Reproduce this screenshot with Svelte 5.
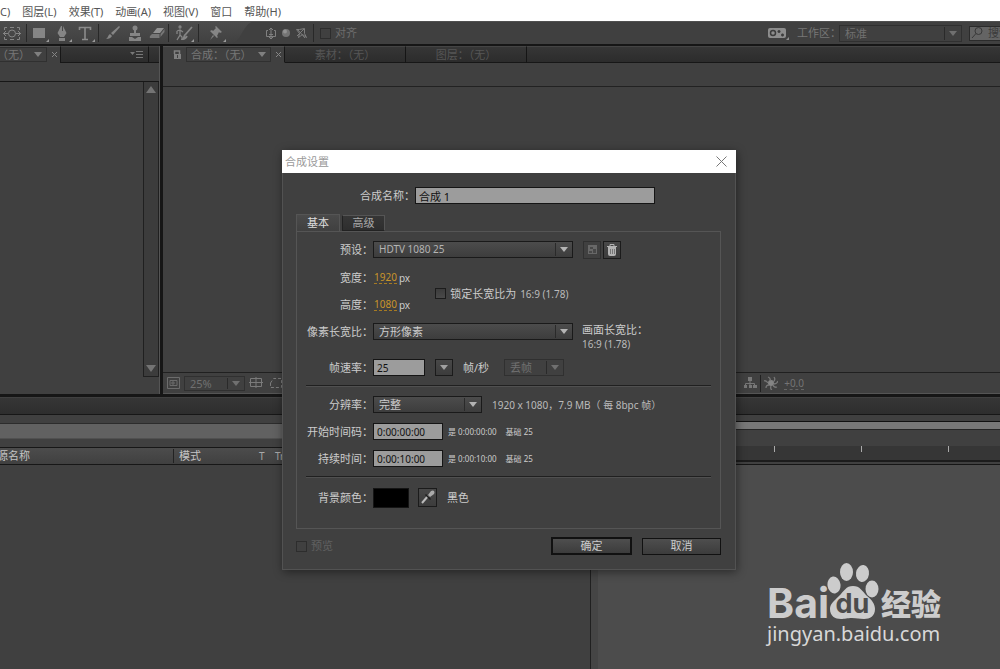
<script>
  let compName = $state('合成 1');
  let frameRate = $state('25');
  let startCode = $state('0:00:00:00');
  let duration = $state('0:00:10:00');
  let lockAspect = $state(false);

  const menus = ['C)', '图层(L)', '效果(T)', '动画(A)', '视图(V)', '窗口', '帮助(H)'];
  const inactiveTabs = ['素材：（无）', '图层：（无）'];
</script>

<div class="app">
  <nav class="menubar" aria-label="菜单">
    {#each menus as item}<button>{item}</button>{/each}
  </nav>

  <div class="toolbar">
    <div class="tools">
      <div class="group first">
        <button class="tool" aria-label="锚点工具">
          <svg width="22" height="20" viewBox="0 0 22 20" fill="none" stroke="#858585"><path d="M3.500 7V4.500H6M16 4.500h2.500V7M18.500 14v2.500H16M6 16.500H3.500V14M9 4.500h4M9 16.500h4"/><circle cx="11" cy="10.500" r="3.500"/><path d="M2 10.500h5M15 10.500h5M5 8l-2.500 2.500L5 13M17 8l2.500 2.500L17 13"/></svg>
        </button>
      </div>
      <div class="group shapes">
        <button class="tool" aria-label="矩形工具">
          <svg width="22" height="20" viewBox="0 0 22 20"><path fill="#858585" d="M5 5h12v10H5z"/><path fill="#9a9a9a" d="M21 16v3h-3z"/></svg>
        </button>
        <button class="tool" aria-label="钢笔工具">
          <svg width="22" height="20" viewBox="0 0 22 20"><path fill="#858585" d="M10 3h1v5h1V3l3.500 7-2.500 4H9l-2.500-4zM8 15h6v3H8z"/><path fill="#9a9a9a" d="M21 16v3h-3z"/></svg>
        </button>
        <button class="tool" aria-label="文字工具">
          <svg width="22" height="20" viewBox="0 0 22 20" fill="none" stroke="#8b8b8b" stroke-width="1.600"><path d="M5.500 7V4.500h11V7M11 4.500v12M8 16.500h6"/><path fill="#9a9a9a" stroke="none" d="M21 16v3h-3z"/></svg>
        </button>
      </div>
      <div class="group paint">
        <button class="tool" aria-label="画笔工具">
          <svg width="22" height="20" viewBox="0 0 22 20" fill="#858585"><path d="M17 3l1 1-7 8-2-2zM8 11l2 2c-1 2-3 3-6 3 2-1 2-4 4-5z"/></svg>
        </button>
        <button class="tool" aria-label="图章工具">
          <svg width="22" height="20" viewBox="0 0 22 20" fill="#858585"><circle cx="11" cy="5" r="2.500"/><path d="M10 7h2v3h4v3H6v-3h4zM5 14h3l3 2 3-2h3v4H5z"/></svg>
        </button>
        <button class="tool" aria-label="橡皮擦工具">
          <svg width="22" height="20" viewBox="0 0 22 20"><path fill="#929292" d="M11 5h7l-4 5H7z"/><path fill="#777" d="M6 11h7.500v4H5q-2 0-1-2zM14.500 11l4-5v3l-4 5z"/></svg>
        </button>
      </div>
      <div class="group single">
        <button class="tool" aria-label="旋转画笔工具">
          <svg width="22" height="20" viewBox="0 0 22 20" fill="none" stroke="#858585" stroke-width="1.300"><circle cx="7" cy="4" r="1"/><path d="M4 8l3-1 3 2M7 7v5l-3 5M7 12l2 2v3M4 8v3"/><path d="M19 4l-7 8M12 12c-1 1-1 3-2 4 2 0 3-1 4-3" stroke-width="1.800"/><path fill="#9a9a9a" stroke="none" d="M21 16v3h-3z"/></svg>
        </button>
      </div>
      <div class="group pin">
        <button class="tool" aria-label="操控点工具">
          <svg width="22" height="20" viewBox="0 0 22 20"><path fill="#858585" d="M11 3l6 6-2 1-1-1-2 4 1 1-1 1-7-7 2-1 1 1 3-3-1-1zM8 12l1 1-4 4z"/><path fill="#9a9a9a" d="M21 16v3h-3z"/></svg>
        </button>
      </div>
      <svg class="swoop" width="27" height="23" viewBox="0 0 27 23"><path fill="#404040" d="M0 23C12 20 11 2 24 0h3v23z"/></svg>
    </div>
    <div class="group axes">
      <button class="axis" aria-label="本地轴模式"><svg width="14" height="14" viewBox="0 0 14 14" fill="none" stroke="#808080"><path d="M4 4.500H2.500v6h9v-6H10M7 2v11M5 4l2-2 2 2M5 8.500h4M5 11l2 2 2-2"/></svg></button>
      <button class="axis" aria-label="世界轴模式"><svg width="14" height="14" viewBox="0 0 14 14"><circle cx="7" cy="7" r="4" fill="#747474"/><circle cx="6" cy="5.500" r="2" fill="#929292"/></svg></button>
      <button class="axis" aria-label="视图轴模式"><svg width="14" height="14" viewBox="0 0 14 14" fill="none" stroke="#7d7d7d"><path d="M2.500 3.500h3l5-1v5l2 4-4-3-4 3 1-4zM4 4l7 8M10 3l-7 7"/></svg></button>
    </div>
    <label class="snap"><input type="checkbox" class="check dim" /><span>对齐</span></label>

    <div class="workspace">
      <svg width="21" height="14" viewBox="0 0 21 14"><rect x="0" y="2" width="18" height="10" rx="2" fill="#8d8d8d"/><g fill="none" stroke="#3c3c3c" stroke-width="1.500"><circle cx="5" cy="7" r="2.500"/><path d="M9.500 5.500h3M11 4v3M13 9h3M14.500 7.500v3"/></g><path fill="#8d8d8d" d="M21 11v3h-3z"/></svg>
      <label for="ws">工作区：</label>
      <span class="select dim ws"><select id="ws"><option>标准</option></select></span>
      <span class="search">
        <svg width="14" height="14" viewBox="0 0 14 14" fill="none" stroke="#383838"><circle cx="8.500" cy="5" r="3.500"/><path d="M6 7.500L2 12"/></svg>
        <input aria-label="搜索帮助" placeholder="搜索帮助" />
      </span>
    </div>
  </div>

  <div class="upper">
    <section class="project">
      <div class="tabs">
        <div class="tab on left-tab">
          <button class="viewer"><span>（无）</span><i class="arrow"></i></button>
          <button class="x" aria-label="关闭"><svg width="7" height="7" viewBox="0 0 7 7" stroke="#858585"><path d="M1 1l5 5M6 1L1 6"/></svg></button>
        </div>
        <div class="tab rest"><button class="panelmenu" aria-label="面板菜单"><svg width="14" height="9" viewBox="0 0 14 9"><path fill="#777" d="M0 2h5L2.500 5zM6 1h7v1H6zM6 4h7v1H6zM6 7h7v1H6z"/></svg></button></div>
        <div class="tab edge"></div>
      </div>
      <div class="project-body">
        <div class="scroll"><i class="arrow up"></i><i class="arrow"></i></div>
      </div>
    </section>
    <section class="viewerpanel">
      <div class="tabs">
        <div class="tab on comp-tab">
          <svg width="9" height="11" viewBox="0 0 9 11"><path fill="none" stroke="#808080" stroke-width="1.500" d="M1.500 5V2h5v3"/><path fill="#808080" d="M1 5h7v5H1z"/><path fill="#404040" d="M4 6h1v3H4z"/></svg>
          <button class="viewer wide"><span>合成：（无）</span><i class="arrow"></i></button>
          <button class="x" aria-label="关闭"><svg width="7" height="7" viewBox="0 0 7 7" stroke="#858585"><path d="M1 1l5 5M6 1L1 6"/></svg></button>
        </div>
        {#each inactiveTabs as tab}<button class="tab off">{tab}</button>{/each}
        <div class="tab rest"></div>
      </div>
      <div class="canvas-head"></div>
      <div class="canvas"></div>
      <div class="viewbar">
        <div class="viewleft">
          <svg width="13" height="12" viewBox="0 0 13 12" fill="none" stroke="#6c6c6c"><path d="M.5 .5h12v11H.5zM3 3.500h7v5H3zM5 5h2v2H5z"/></svg>
          <span class="select dim zoom"><select aria-label="放大率"><option>25%</option></select></span>
          <svg width="14" height="12" viewBox="0 0 14 12" fill="none" stroke="#7b7b7b"><path d="M1.500 1.500h11v8h-11zM7 0v11M0 5.500h14"/></svg>
          <svg class="mask" width="14" height="12" viewBox="0 0 14 12" fill="none" stroke="#7b7b7b"><path stroke-dasharray="3 2" d="M1.500 6l3-4.500h8v9h-11z"/></svg>
        </div>
        <svg width="4" height="12" viewBox="0 0 4 12" fill="none" stroke="#6c6c6c"><path d="M0 2.500h2.500v7H0"/></svg>
        <svg width="14" height="12" viewBox="0 0 14 12"><path fill="#777" d="M5 0h4v4H5zM1 8h3v3H1zM6 8h3v3H6zM10 8h4v3h-4z"/><path fill="none" stroke="#777" d="M7 4v4M2.500 8V6.500h9V8"/></svg>
        <i class="vsep"></i>
        <svg width="14" height="14" viewBox="0 0 14 14"><circle cx="7" cy="7" r="3" fill="#858585"/><path fill="none" stroke="#777" stroke-width="1.300" d="M6 5Q7 2 4 1M9 6Q12 4 10 1M10 8q3 0 4-3M9 9q1 3 4 2M7 10q-1 3 1 4M5 9q-3 0-3 3M4 7Q2 4 0 5"/></svg>
        <span class="exposure">+0.0</span>
      </div>
    </section>
  </div>

  <div class="lower">
    <div class="band"></div>
    <div class="timeline">
      <section class="layers">
        <div class="work-left"></div>
        <div class="cols"><span class="src">源名称</span><span class="mode">模式</span><span class="t">T</span><span>TrkMat</span></div>
      </section>
      <div class="splitter"></div>
      <section class="ruler">
        <div class="nav"></div>
        <div class="gap"></div>
        <div class="ticks"><i></i><i></i><i></i></div>
        <div class="ruler-foot"></div>
        <div class="tracks">
          <div class="brand">
            <div class="brand-top">
              <span class="bai">Bai</span>
              <svg width="52" height="58" viewBox="0 0 52 58"><g fill="#ccc"><ellipse cx="7" cy="22" rx="6.500" ry="8.500" transform="rotate(-8 7 22)"/><ellipse cx="19.500" cy="9" rx="6.500" ry="9"/><ellipse cx="35.500" cy="10.500" rx="6.500" ry="8.500" transform="rotate(8 35.500 10.500)"/><ellipse cx="45" cy="26" rx="6.500" ry="8.500"/><path d="M26 23c7 0 9 5 14 10 5 4 8 8 8 13 0 7-5 10-11 10-5 0-7-1-12-1s-7 1-11 1C8 56 3 53 3 46c0-5 4-8 9-13 5-5 7-10 14-10z"/></g><text x="25.500" y="50" text-anchor="middle" class="du">du</text></svg>
              <span class="jy">经验</span>
            </div>
            <div class="url">jingyan.baidu.com</div>
          </div>
        </div>
      </section>
    </div>
  </div>

  <div class="dialog" role="dialog" aria-labelledby="dlg-title">
    <header>
      <span id="dlg-title">合成设置</span>
      <button aria-label="关闭"><svg width="11" height="11" viewBox="0 0 11 11" stroke="#777"><path d="M.5 .5l10 10M10.500 .5l-10 10"/></svg></button>
    </header>
    <form class="body" onsubmit={(e) => e.preventDefault()}>
      <div class="name"><label for="cname">合成名称：</label><input id="cname" class="field" bind:value={compName} /></div>
      <div class="dtabs"><button type="button" class="sel">基本</button><button type="button">高级</button></div>
      <div class="panel">
        <div class="row">
          <label for="preset">预设：</label>
          <span class="select full"><select id="preset"><option>HDTV 1080 25</option></select></span>
          <div class="pair">
            <button type="button" class="icon off" aria-label="存储预设"><svg width="11" height="11" viewBox="0 0 11 11"><path fill="#686868" d="M1 1h9v9H1z"/><path fill="#484848" d="M3 3h3v2H3zM6 5h3v4H6zM2 7h3v2H2z"/></svg></button>
            <button type="button" class="icon" aria-label="删除预设"><svg width="12" height="14" viewBox="0 0 12 14"><path fill="none" stroke="#b4b4b4" d="M4 3V1.500h4V3M1 3.500h10"/><path fill="#b4b4b4" d="M2 4h8v7q0 2-2 2H4q-2 0-2-2z"/><path stroke="#777" d="M4.500 6v5M6.500 6v5M8.500 6v5"/></svg></button>
          </div>
        </div>
        <div class="size">
          <div>
            <div class="row"><span class="lab">宽度：</span><button type="button" class="hot">1920</button><span class="px">px</span></div>
            <div class="row"><span class="lab">高度：</span><button type="button" class="hot">1080</button><span class="px">px</span></div>
          </div>
          <label class="lock"><input type="checkbox" class="check" bind:checked={lockAspect} /><span>锁定长宽比为</span><span class="lat">16:9 (1.78)</span></label>
        </div>
        <div class="row">
          <label for="par">像素长宽比：</label>
          <span class="select full"><select id="par" class="cjk"><option>方形像素</option></select></span>
          <div class="aspect"><span>画面长宽比：</span><span class="lat">16:9 (1.78)</span></div>
        </div>
        <div class="row rate">
          <label for="fps">帧速率：</label>
          <input id="fps" class="field fps" bind:value={frameRate} />
          <button type="button" class="icon drop" aria-label="选择帧速率"><i class="arrow"></i></button>
          <span class="unit">帧/秒</span>
          <span class="select dim df"><select aria-label="丢帧" disabled><option>丢帧</option></select></span>
        </div>
        <hr />
        <div class="row">
          <label for="res">分辨率：</label>
          <span class="select res"><select id="res" class="cjk"><option>完整</option></select></span>
          <span class="lat info">1920 x 1080，7.9 MB（ 每 8bpc 帧）</span>
        </div>
        <div class="row">
          <label for="start">开始时间码：</label>
          <input id="start" class="field time" bind:value={startCode} />
          <span class="small"><span>是 0:00:00:00</span><span>基础 25</span></span>
        </div>
        <div class="row">
          <label for="dur">持续时间：</label>
          <input id="dur" class="field time" bind:value={duration} />
          <span class="small"><span>是 0:00:10:00</span><span>基础 25</span></span>
        </div>
        <hr />
        <div class="row color">
          <span class="lab">背景颜色：</span>
          <button type="button" class="swatch" aria-label="背景颜色"></button>
          <button type="button" class="icon eye" aria-label="吸管"><svg width="17" height="17" viewBox="0 0 17 17"><path fill="none" stroke="#bbb" stroke-width="2" d="M3 14l6-7"/><path fill="#1c1c1c" d="M7 5l5 5-1 1-5-5z"/><path fill="#aaa" d="M9 6l3-4q2-1 3 0t0 3l-4 3z"/></svg></button>
          <span>黑色</span>
        </div>
      </div>
      <footer>
        <label class="preview"><input type="checkbox" class="check dim" disabled /><span>预览</span></label>
        <button type="submit" class="default">确定</button>
        <button type="button">取消</button>
      </footer>
    </form>
  </div>
</div>

<style>
  :global(body) { margin: 0; background: #404040; }
  * { box-sizing: border-box; }
  .app {
    position: relative;
    display: flex;
    flex-direction: column;
    height: 100vh;
    overflow: hidden;
    background: #404040;
    color: #777;
    font: 11px/14px "Noto Sans", "Noto Sans CJK SC", sans-serif;
  }
  button, input, select { font: inherit; color: inherit; margin: 0; padding: 0; border: 0; background: none; border-radius: 0; }
  button { white-space: nowrap; }
  svg { display: block; flex: none; }
  label, span { white-space: nowrap; }

  .menubar { display: flex; gap: 12px; height: 21px; background: #fff; color: #555; flex: none; align-items: center; padding-top: 3px; }
  .toolbar { display: flex; align-items: center; height: 25px; flex: none; border-top: 1px solid #505050; border-bottom: 2px solid #161616; overflow: hidden; }
  .tools { display: flex; align-items: center; height: 100%; background: linear-gradient(#4c4c4c, #404040); }
  .group { display: flex; align-items: center; height: 18px; border-right: 1px solid #282828; }
  .tool { width: 23px; flex: none; }
  .first { padding: 0 2px 0 1px; }
  .shapes { padding: 0 1px 0 1px; }
  .paint { padding: 0 0 0 3px; }
  .paint .tool { width: 22px; }
  .single { padding: 0 2px 0 4px; }
  .pin { border: 0; padding: 0 3px 0 6px; }
  .swoop { align-self: flex-end; }
  .axes { padding: 0 5px 0 6px; gap: 1px; }
  .axis { width: 14px; }
  .snap { display: flex; gap: 4px; align-items: center; padding-left: 6px; color: #6d6d6d; }
  .check { appearance: none; width: 11px; height: 11px; border: 1px solid #1c1c1c; background: linear-gradient(#3c3c3c, #4a4a4a); }
  .check:checked { background: #999; }
  .check.dim { border-color: #2d2d2d; background: none; }
  .workspace { display: flex; align-items: center; margin-left: auto; color: #777; }
  .workspace label { width: 42px; margin-left: 8px; }
  .search { display: flex; align-items: center; width: 31px; height: 15px; margin-left: 7px; background: #646464; overflow: hidden; border: 1px solid #2b2b2b; border-right: 0; }
  .search input { width: 70px; margin-left: 4px; flex: none; }
  .search input::placeholder { color: #3b3b3b; opacity: 1; }

  .arrow { display: block; flex: none; width: 0; height: 0; border: 4px solid transparent; border-top: 5px solid #a0a0a0; border-bottom: 0; }
  .arrow.up { border-top: 0; border-bottom: 5px solid #858585; }
  .select { position: relative; display: block; flex: none; height: 17px; border: 1px solid #1a1a1a; background: linear-gradient(#4c4c4c, #3d3d3d); color: #b4b4b4; }
  .select select { appearance: none; display: block; width: 100%; height: 15px; padding-left: 5px; line-height: 15px; font-size: 10px; outline: 0; opacity: 1; }
  .select select.cjk { font-size: 11px; color: #ccc; }
  .select::before { content: ""; position: absolute; right: 16px; top: 1px; bottom: 1px; border-left: 1px solid #2a2a2a; pointer-events: none; }
  .select::after { content: ""; position: absolute; right: 4px; top: 5px; border: 4px solid transparent; border-top: 5px solid #b4b4b4; border-bottom: 0; pointer-events: none; }
  .select.dim { border-color: #303030; background: none; color: #707070; }
  .select.dim select { font-size: 11px; }
  .select.dim::after { border-top-color: #707070; }
  .ws { width: 123px; }

  .upper { display: flex; flex: 350 1 0; min-height: 0; border-bottom: 3px solid #161616; }
  .project { display: flex; flex-direction: column; width: 16%; flex: none; border-right: 1px solid #555; }
  .viewerpanel { display: flex; flex-direction: column; flex: 1; min-width: 0; border-left: 3px solid #161616; }
  .tabs { display: flex; height: 17px; flex: none; }
  .tab { display: flex; align-items: center; background: linear-gradient(#363636, #2c2c2c); border-bottom: 1px solid #171717; border-top: 1px solid #444; }
  .tab.on { background: #404040; border-bottom-color: #404040; border-top-color: #505050; }
  .tab.off { justify-content: center; width: 121px; border-right: 1px solid #151515; color: #565656; }
  .tab.rest { flex: 1; border-left: 1px solid #171717; justify-content: flex-end; }
  .viewerpanel .rest { border-left: 0; }
  .edge { width: 11px; border-left: 1px solid #171717; }
  .left-tab { width: 60px; gap: 4px; }
  .viewer { display: flex; align-items: center; height: 15px; border: 1px solid #303030; border-left: 0; width: 47px; justify-content: space-between; padding-right: 4px; }
  .viewer span { margin-left: -3px; }
  .viewer .arrow { border-top-color: #808080; }
  .wide { width: 85px; border-left: 1px solid #303030; }
  .wide span { margin-left: 4px; }
  .comp-tab { width: 122px; gap: 4px; padding-left: 10px; border-right: 1px solid #171717; }
  .panelmenu { margin-right: 4px; }
  .project-body { display: flex; justify-content: flex-end; flex: 1; margin-top: 18px; margin-bottom: 17px; border-top: 1px solid #171717; }
  .scroll { display: flex; flex-direction: column; align-items: center; justify-content: space-between; width: 16px; padding: 4px 0; background: #3c3c3c; border: 1px solid #202020; border-top: 0; }
  .scroll .arrow { border-width: 5px; border-bottom-width: 0; border-top: 7px solid #747474; }
  .scroll .arrow.up { border-top: 0; border-bottom: 7px solid #747474; }
  .canvas-head { height: 24px; border-bottom: 1px solid #222; flex: none; }
  .canvas { flex: 1; }
  .viewbar { display: flex; align-items: center; height: 22px; flex: none; border-top: 1px solid #202020; border-bottom: 1px solid #555; color: #747474; gap: 6px; }
  .viewleft { display: flex; align-items: center; width: 68%; padding-left: 4px; margin-right: -5px; }
  .zoom { width: 61px; height: 15px; margin: 0 4px; }
  .zoom select { height: 13px; line-height: 13px; }
  .zoom::after { top: 4px; }
  .mask { margin-left: 6px; }
  .vsep { width: 1px; height: 17px; background: #202020; margin: 0 -3px; }
  .exposure { font-size: 10px; line-height: 12px; border-bottom: 1px dashed #666; }

  .lower { display: flex; flex-direction: column; flex: 273 1 0; min-height: 0; }
  .band { height: 18px; flex: none; background: linear-gradient(#363636, #2e2e2e); border-bottom: 1px solid #171717; border-top: 1px solid #404040; }
  .timeline { display: flex; flex: 1; min-height: 0; }
  .layers { width: 59%; flex: none; padding-top: 8px; }
  .work-left { height: 16px; background: #616161; border-top: 1px solid #2c2c2c; border-bottom: 1px solid #505050; }
  .cols { display: flex; align-items: center; height: 18px; margin-top: 8px; border: 1px solid #171717; border-width: 1px 0; background: linear-gradient(#4c4c4c, #404040); color: #c4c4c4; }
  .src { width: 30%; margin-left: -3px; border-right: 1px solid #222; }
  .mode { width: 85px; padding-left: 5px; }
  .cols .t { width: 16px; }
  .cols span:nth-child(n + 3) { font-size: 10px; color: #aaa; }
  .splitter { width: 8px; flex: none; background: #454545; border-left: 1px solid #202020; }
  .ruler { display: flex; flex-direction: column; flex: 1; padding-top: 6px; background: #404040; }
  .nav { height: 8px; flex: none; background: #787878; border-top: 1px solid #111; }
  .gap { height: 17px; flex: none; border-top: 1px solid #252525; }
  .ticks { display: flex; justify-content: flex-end; gap: 86px; height: 14px; flex: none; padding-right: 51px; background: #363636; }
  .ticks i { width: 1px; height: 6px; background: #aaa; }
  .ruler-foot { height: 5px; flex: none; border-top: 2px solid #1c1c1c; border-bottom: 1px solid #151515; }
  .tracks { display: flex; justify-content: flex-end; align-items: flex-end; flex: 1; background: #4c4c4c; padding: 0 56px 22px 0; }
  .brand { color: #ccc; width: 177px; }
  .brand-top { display: flex; align-items: flex-end; height: 58px; }
  .bai { font: 700 41px/36px Inter, sans-serif; width: 60px; flex: none; }
  .du { font: 700 27px Inter, sans-serif; fill: #4c4c4c; }
  .jy { font: 900 30px/38px "Noto Sans CJK SC", sans-serif; margin-left: 2px; }
  .url { font-size: 20px; line-height: 26px; color: #d8d8d8; }

  .dialog { position: absolute; left: 282px; top: 150px; width: 454px; background: #404040; border: 1px solid #525252; border-top: 0; box-shadow: 1px 2px 9px rgba(0, 0, 0, .45); color: #ccc; }
  header { display: flex; align-items: center; justify-content: space-between; height: 23px; margin: 0 -1px; padding: 0 9px 0 3px; background: #fff; color: #999; }
  .body { padding: 14px 14px 14px 13px; }
  .name { display: flex; align-items: center; padding-left: 64px; }
  .name label { width: 55px; text-align: right; }
  .name .field { width: 240px; font-size: 11px; }
  .field { flex: none; height: 17px; border: 1px solid #151515; background: #9c9c9c; color: #111; padding-left: 3px; font-size: 10px; }
  .dtabs { display: flex; gap: 2px; align-items: flex-end; height: 17px; margin-top: 10px; }
  .dtabs button { width: 43px; height: 16px; background: linear-gradient(#363636, #2e2e2e); border: 1px solid #222; border-top-color: #555; border-right-color: #555; color: #aaa; }
  .dtabs .sel { width: 44px; height: 17px; background: linear-gradient(#4a4a4a, #404040); border-color: #555; border-bottom: 0; color: #ddd; }
  .panel { border: 1px solid #555; padding: 4px 0 17px; }
  .row { display: flex; align-items: center; height: 27px; }
  .row > label, .lab { width: 76px; flex: none; text-align: right; }
  .full { width: 200px; }
  .pair { display: flex; gap: 2px; margin-left: 10px; }
  .icon { display: flex; align-items: center; justify-content: center; width: 18px; height: 18px; flex: none; border: 1px solid #1b1b1b; background: linear-gradient(#484848, #3c3c3c); }
  .icon.off { border-color: #303030; background: none; }
  .size { display: flex; padding-top: 1px; }
  .hot { color: #c9952b; font-size: 10px; line-height: 12px; border-bottom: 1px dashed #a67a22; margin-left: 1px; }
  .px { font-size: 10px; margin-left: 2px; }
  .lat { font-size: 10px; color: #bbb; }
  .lock { display: flex; align-items: center; padding-top: 5px; margin-left: 25px; gap: 4px; }
  .lock .check { flex: none; }
  .aspect { display: flex; flex-direction: column; align-self: flex-start; padding-top: 5px; margin-left: 9px; }
  .rate { margin-top: 9px; }
  .fps { width: 52px; }
  .drop { margin: 0 10px; height: 17px; }
  .unit { width: 41px; }
  .df { width: 60px; border-color: #333; color: #606060; }
  hr { height: 2px; margin: 4px 9px; border: 0; border-top: 1px solid #202020; border-bottom: 1px solid #505050; }
  .res { width: 109px; }
  .info { margin-left: 10px; }
  .time { width: 70px; }
  .small { display: flex; gap: 9px; font-size: 8px; margin-left: 5px; }
  .swatch { width: 36px; height: 20px; background: #000; border: 1px solid #151515; }
  .eye { margin: 0 10px 0 9px; width: 19px; height: 19px; }
  .color { margin-top: 6px; }
  footer { display: flex; align-items: center; gap: 10px; margin-top: 8px; }
  .preview { display: flex; align-items: center; gap: 4px; margin-right: auto; color: #606060; }
  footer button { width: 79px; height: 17px; line-height: 14px; border: 1px solid #111; background: linear-gradient(#4e4e4e, #3c3c3c); }
  footer .default { width: 81px; height: 18px; border: 2px solid #111; }
</style>
